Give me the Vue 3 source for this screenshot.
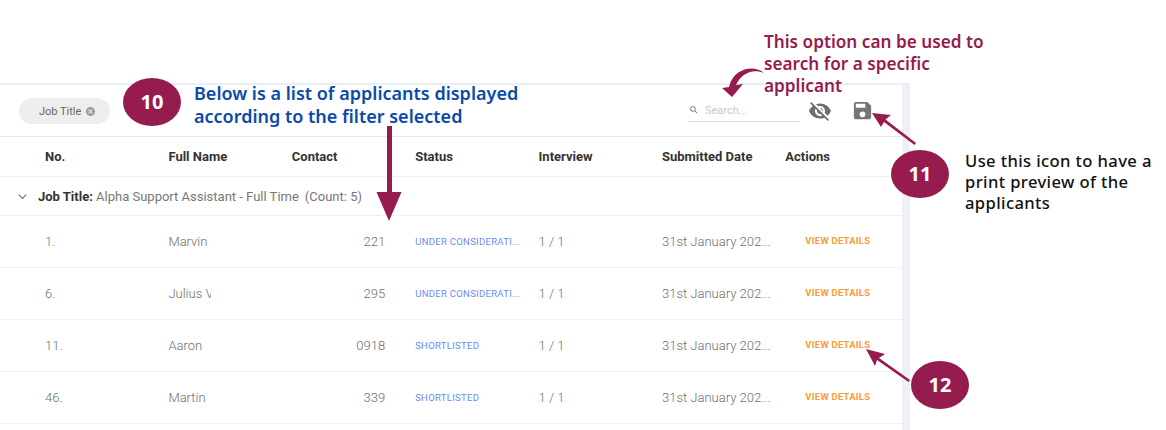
<script setup>
const columns = ['No.', 'Full Name', 'Contact', 'Status', 'Interview', 'Submitted Date', 'Actions']
const rows = [
  { no: '1.', name: 'Marvin', contact: '221', status: 'UNDER CONSIDERATI...' },
  { no: '6.', name: 'Julius V', contact: '295', status: 'UNDER CONSIDERATI...' },
  { no: '11.', name: 'Aaron', contact: '0918', status: 'SHORTLISTED' },
  { no: '46.', name: 'Martin', contact: '339', status: 'SHORTLISTED' },
]
</script>

<template>
  <div class="page">
    <div class="panel-wrap">
      <section class="panel">
        <div class="toolbar">
          <div class="chip">
            <span>Job Title</span>
            <svg class="chip-x" viewBox="0 0 24 24" width="11" height="11">
              <path fill="#9e9e9e" d="M12 2a10 10 0 1 0 0 20 10 10 0 0 0 0-20zm5 13.600L15.600 17 12 13.400 8.400 17 7 15.600 10.600 12 7 8.400 8.400 7l3.600 3.600L15.600 7 17 8.400 13.400 12z"/>
            </svg>
          </div>
          <div class="tools">
            <label class="search">
              <svg viewBox="0 0 24 24" width="10" height="10">
                <path fill="#757575" d="M15.500 14h-.79l-.28-.27A6.470 6.470 0 0 0 16 9.500 6.500 6.500 0 1 0 9.500 16c1.610 0 3.090-.59 4.230-1.570l.27.28v.79l5 4.990L20.490 19l-4.990-5zm-6 0C7.010 14 5 11.990 5 9.500S7.010 5 9.500 5 14 7.010 14 9.500 11.990 14 9.500 14z"/>
              </svg>
              <span class="placeholder">Search...</span>
            </label>
            <svg class="eye" viewBox="0 0 24 24" width="24" height="24">
              <path fill="#6f6f6f" d="M12 7c2.760 0 5 2.240 5 5 0 .65-.13 1.260-.36 1.830l2.920 2.920c1.510-1.260 2.700-2.890 3.430-4.750-1.730-4.390-6-7.500-11-7.500-1.400 0-2.740.25-3.980.7l2.160 2.160C10.740 7.130 11.350 7 12 7zM2 4.270l2.280 2.280.46.460C3.080 8.300 1.780 10.020 1 12c1.730 4.390 6 7.500 11 7.500 1.550 0 3.030-.3 4.380-.84l.42.420L19.730 22 21 20.730 3.270 3 2 4.270zM7.530 9.800l1.550 1.550c-.05.210-.08.430-.08.650 0 1.660 1.340 3 3 3 .22 0 .44-.03.650-.08l1.550 1.550c-.67.330-1.410.530-2.200.530-2.760 0-5-2.240-5-5 0-.79.2-1.530.53-2.200zm4.310-.78l3.150 3.150.02-.16c0-1.660-1.340-3-3-3l-.17.010z"/>
            </svg>
            <svg class="save" viewBox="0 0 24 24" width="23" height="23">
              <path fill="#757575" d="M17 3H5a2 2 0 0 0-2 2v14a2 2 0 0 0 2 2h14a2 2 0 0 0 2-2V7l-4-4zm-5 16a3 3 0 1 1 0-6 3 3 0 0 1 0 6zm3-10H5V5h10v4z"/>
            </svg>
          </div>
        </div>

        <div class="grid head">
          <div v-for="c in columns" :key="c">{{ c }}</div>
        </div>

        <div class="group">
          <svg viewBox="0 0 24 24" width="15" height="15">
            <path fill="none" stroke="#757575" stroke-width="2" d="M6 9l6 6 6-6"/>
          </svg>
          <span class="group-text"><b>Job Title:</b> Alpha Support Assistant - Full Time<span class="count">(Count: 5)</span></span>
        </div>

        <div v-for="r in rows" :key="r.no" class="grid row">
          <div>{{ r.no }}</div>
          <div class="name">{{ r.name }}</div>
          <div class="contact">{{ r.contact }}</div>
          <div class="status">{{ r.status }}</div>
          <div>1 / 1</div>
          <div class="date">31st January 202...</div>
          <div class="action">VIEW DETAILS</div>
        </div>
      </section>
    </div>

    <div class="badge b10">10</div>
    <div class="badge b11">11</div>
    <div class="badge b12">12</div>

    <p class="note blue">Below is a list of applicants displayed<br>according to the filter selected</p>
    <p class="note red">This option can be used to<br>search for a specific<br>applicant</p>
    <p class="note black">Use this icon to have a<br>print preview of the<br>applicants</p>

    <svg class="arrows" width="1166" height="430" viewBox="0 0 1166 430">
      <g fill="#961b4e" stroke="none">
        <path d="M387 126h5v66h9.500L389 221l-12.500-29H387z"/>
        <path d="M764 73C755 65 734 67 729 87L722 88L732 97L743 84L736 85C741 74 752 68 764 73Z"/>
        <path d="M872 113L891 115L885.500 119.500L916 143L914.500 145L884 122L881 127Z"/>
        <path d="M866 349L885 354L879 358L910 380L908.500 382L877 360L875 366Z"/>
      </g>
    </svg>
  </div>
</template>

<style>
html, body { margin: 0; background: #fff; }
</style>

<style scoped>
.page {
  position: relative;
  width: 1166px;
  height: 430px;
  overflow: hidden;
  background: #fff;
  font-family: Roboto, sans-serif;
}
.panel-wrap {
  padding-top: 83px;
  width: 910px;
}
.panel {
  box-sizing: border-box;
  height: 347px;
  border-top: 2px solid #e9eff9;
  border-right: 8px solid #eef0f5;
  overflow: hidden;
}
.toolbar {
  height: 51px;
  border-bottom: 1px solid #e8e8e8;
  display: flex;
  align-items: center;
  justify-content: space-between;
  padding: 0 28px 0 19px;
}
.chip {
  box-sizing: border-box;
  width: 91px;
  height: 26px;
  padding-left: 20px;
  border-radius: 13px;
  background: #eeeeee;
  display: flex;
  align-items: center;
  gap: 4px;
  font-size: 11px;
  color: #666;
  margin-top: 1px;
}
.tools { display: flex; align-items: center; }
.search {
  width: 112px;
  height: 22px;
  margin-right: 8px;
  border-bottom: 1px solid #e0e0e0;
  display: flex;
  align-items: center;
  gap: 6px;
  box-sizing: border-box;
  padding-left: 1px;
  font-size: 11px;
  color: #c8c8c8;
}
.eye { margin-right: 19px; }
.grid {
  display: grid;
  grid-template-columns: repeat(7, 123.400px);
  padding-left: 45px;
  align-items: center;
}
.head {
  height: 39px;
  border-bottom: 1px solid #f0f0f0;
  font-size: 13px;
  font-weight: 700;
  color: #333;
}
.group {
  height: 38px;
  border-bottom: 1px solid #f0f0f0;
  display: flex;
  align-items: center;
  padding-left: 15px;
  gap: 8px;
  font-size: 13px;
  color: #777;
}
.group b { color: #333; }
.count { margin-left: 6px; }
.row {
  height: 52px;
  box-sizing: border-box;
  border-bottom: 1px solid #f2f2f2;
  font-size: 13px;
  color: #6e6e6e;
  font-weight: 300;
}
.name { white-space: nowrap; overflow: hidden; max-width: 43px; }
.contact { text-align: right; padding-right: 30px; }
.status {
  font-size: 9.500px;
  color: #6a8cf0;
  letter-spacing: .3px;
  font-weight: 400;
  white-space: nowrap;
  margin-top: -1px;
}
.date { white-space: nowrap; }
.action {
  font-size: 9.400px;
  font-weight: 700;
  color: #fb9a3a;
  letter-spacing: .3px;
  padding-left: 20px;
  white-space: nowrap;
  margin-top: -2px;
}
.badge {
  position: absolute;
  width: 58px;
  height: 48px;
  border-radius: 50%;
  background: #961b4e;
  color: #fff;
  font: 700 20px/48px "Noto Sans", sans-serif;
  text-align: center;
}
.b10 { left: 123px; top: 78px; }
.b11 { left: 891px; top: 150px; }
.b12 { left: 911px; top: 361px; }
.note {
  position: absolute;
  margin: 0;
  font-family: "Noto Sans", sans-serif;
  white-space: nowrap;
}
.blue { left: 194px; top: 82px; font-size: 18px; line-height: 23px; font-weight: 600; color: #0a4aa8; }
.red { left: 764px; top: 31px; font-size: 17.200px; line-height: 22px; font-weight: 600; color: #961b4e; }
.black { left: 965px; top: 150px; font-size: 16.600px; letter-spacing: .38px; line-height: 21px; font-weight: 500; color: #111; }
.arrows { position: absolute; left: 0; top: 0; pointer-events: none; }
</style>
